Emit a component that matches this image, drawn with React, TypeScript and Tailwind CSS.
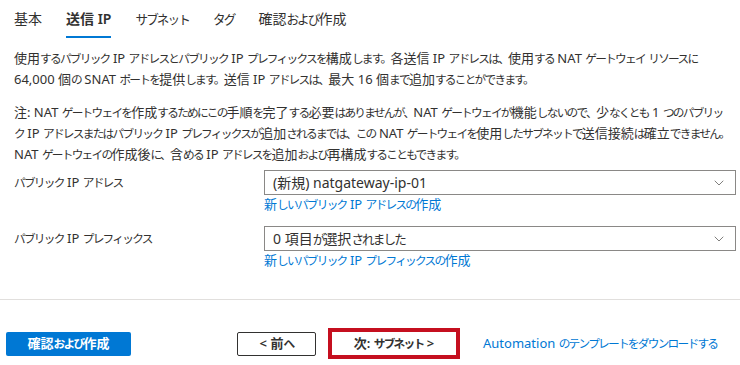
import { ChevronDown } from "lucide-react"

const tabs = ["基本", "送信 IP", "サブネット", "タグ", "確認および作成"]

const font = { fontFamily: '"Noto Sans", "Noto Sans CJK JP", sans-serif' }

// kana and punctuation are narrow in the original UI font, so tighten them
function J({ t }: { t: string }) {
  const parts = t.split(/([\u3000-\u30ff]+)/)
  return (
    <span>
      {parts.map((p, i) =>
        i % 2 ? (
          <span key={i} className="text-[0.9em] tracking-[-0.15em]">
            {p}
          </span>
        ) : (
          p
        )
      )}
    </span>
  )
}

function Select({ value }: { value: string }) {
  return (
    <div className="flex h-[25px] w-[472px] items-center justify-between border border-[#8a8886] bg-white pl-[8px] pr-[8px] text-[14px] text-[#323130]">
      <span className="whitespace-nowrap">
        <J t={value} />
      </span>
      <ChevronDown className="h-[16px] w-[16px] text-[#605e5c]" strokeWidth={1.2} />
    </div>
  )
}

function FormRow({ label, value, link }: { label: string; value: string; link: string }) {
  return (
    <div className="flex">
      <div className="flex h-[25px] w-[250px] shrink-0 items-center whitespace-nowrap text-[13px] text-[#323130]">
        <J t={label} />
      </div>
      <div className="flex shrink-0 flex-col">
        <Select value={value} />
        <a className="mt-[1px] whitespace-nowrap text-[13px] leading-[16px] text-[#0078d4]">
          <J t={link} />
        </a>
      </div>
    </div>
  )
}

const intro = [
  "使用するパブリック IP アドレスとパブリック IP プレフィックスを構成します。各送信 IP アドレスは、使用する NAT ゲートウェイ リソースに",
  "64,000 個の SNAT ポートを提供します。送信 IP アドレスは、最大 16 個まで追加することができます。",
]

const note = [
  "注: NAT ゲートウェイを作成するためにこの手順を完了する必要はありませんが、NAT ゲートウェイが機能しないので、少なくとも 1 つのパブリッ",
  "ク IP アドレスまたはパブリック IP プレフィックスが追加されるまでは、この NAT ゲートウェイを使用したサブネットで送信接続は確立できません。",
  "NAT ゲートウェイの作成後に、含める IP アドレスを追加および再構成することもできます。",
]

export default function App() {
  return (
    <div className="h-[365px] w-[740px] overflow-hidden bg-white text-[#323130]" style={font}>
      <div className="flex h-[38px] gap-[24px] pl-[14px]">
        {tabs.map((t, i) => (
          <div
            key={t}
            className={`flex h-full items-center whitespace-nowrap border-b-2 pt-[1px] text-[14px] ${
              i === 1 ? "border-[#0078d4] font-semibold" : "border-transparent"
            }`}
          >
            <J t={t} />
          </div>
        ))}
      </div>

      <div className="px-[14px]">
        <div className="mt-[10px] text-[13px] leading-[21px]">
          {intro.map((l) => (
            <div key={l} className="whitespace-nowrap">
              <J t={l} />
            </div>
          ))}
        </div>
        <div className="mt-[12px] text-[13px] leading-[21px]">
          {note.map((l) => (
            <div key={l} className="whitespace-nowrap">
              <J t={l} />
            </div>
          ))}
        </div>

        <div className="mt-[5px] flex flex-col gap-[14px]">
          <FormRow label="パブリック IP アドレス" value="(新規) natgateway-ip-01" link="新しいパブリック IP アドレスの作成" />
          <FormRow label="パブリック IP プレフィックス" value="0 項目が選択されました" link="新しいパブリック IP プレフィックスの作成" />
        </div>
      </div>

      <div className="mt-[31px] h-px w-full bg-[#e1dfdd]" />

      <div className="mt-[28px] flex items-center">
        <button className="ml-[6px] flex h-[24px] w-[125px] items-center justify-center rounded-[2px] bg-[#0078d4] text-[13px] font-semibold text-white">
          <J t="確認および作成" />
        </button>
        <button className="ml-[106px] flex h-[24px] w-[79px] items-center justify-center whitespace-pre rounded-[2px] border border-[#323130] bg-white text-[13px] font-semibold">
          <J t="< 前へ" />
        </button>
        <div className="ml-[12px] flex h-[31px] w-[132px] items-center justify-center whitespace-pre border-4 border-[#c50f1f] bg-white text-[13px] font-semibold">
          <J t="次: サブネット >" />
        </div>
        <a className="ml-[23px] whitespace-nowrap text-[13px] text-[#0078d4]">
          <J t="Automation のテンプレートをダウンロードする" />
        </a>
      </div>
    </div>
  )
}
